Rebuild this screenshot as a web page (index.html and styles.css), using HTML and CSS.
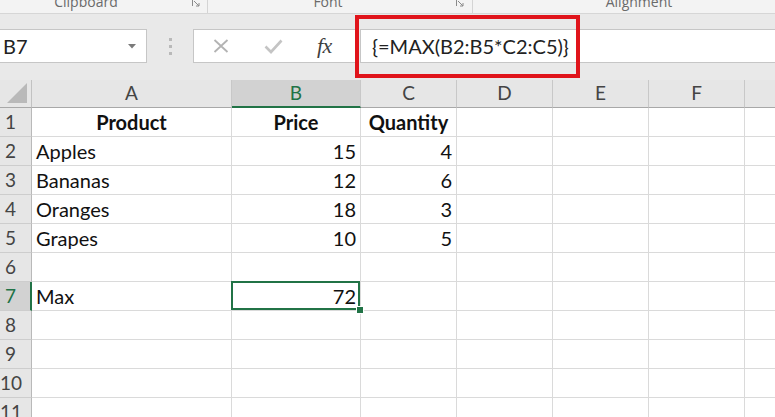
FILE: index.html
```html
<!DOCTYPE html>
<html>
<head>
<meta charset="utf-8">
<link rel="stylesheet" href="styles.css">
</head>
<body>
<div class="app">
  <div class="ribbon">
    <div class="group g1"><span class="glabel">Clipboard</span><svg class="launch" width="8" height="8" viewBox="0 0 8 8"><path d="M0.5 7V0.5H3M2 2l5 5M7 4v3H4" fill="none" stroke="#8a8a8a" stroke-width="1"/></svg></div>
    <div class="group g2"><span class="glabel">Font</span><svg class="launch" width="8" height="8" viewBox="0 0 8 8"><path d="M0.5 7V0.5H3M2 2l5 5M7 4v3H4" fill="none" stroke="#8a8a8a" stroke-width="1"/></svg></div>
    <div class="group g3"><span class="glabel">Alignment</span></div>
  </div>
  <div class="fbar">
    <div class="namebox"><span>B7</span><svg class="dd" width="8" height="5" viewBox="0 0 8 5"><path d="M0 0h8L4 4.5z" fill="#7a7a7a"/></svg></div>
    <div class="grip"><i></i><i></i><i></i></div>
    <div class="fbtns">
      <svg class="ico-x" width="16" height="14" viewBox="0 0 16 14"><path d="M1.5 1l13 12M14.5 1l-13 12" stroke="#b3b3b3" stroke-width="1.8" fill="none"/></svg>
      <svg class="ico-ok" width="19" height="15" viewBox="0 0 19 15"><path d="M1.5 7.5l5.5 5.5L17.5 1.5" stroke="#c4c4c4" stroke-width="2.6" fill="none"/></svg>
      <span class="fx">fx</span>
    </div>
    <div class="finput">{=MAX(B2:B5*C2:C5)}</div>
  </div>
  <div class="sheet">
    <div class="hd corner"><svg width="31" height="27" viewBox="0 0 31 27"><path d="M27 3V23H7z" fill="#b9b9b9"/></svg></div>
    <div class="hd col">A</div>
    <div class="hd col sel">B</div>
    <div class="hd col">C</div>
    <div class="hd col">D</div>
    <div class="hd col">E</div>
    <div class="hd col">F</div>
    <div class="hd col last"></div>

    <div class="hd row">1</div>
    <div class="c center b">Product</div><div class="c center b">Price</div><div class="c center b">Quantity</div><div class="c"></div><div class="c"></div><div class="c"></div><div class="c last"></div>

    <div class="hd row">2</div>
    <div class="c">Apples</div><div class="c num">15</div><div class="c num">4</div><div class="c"></div><div class="c"></div><div class="c"></div><div class="c last"></div>

    <div class="hd row">3</div>
    <div class="c">Bananas</div><div class="c num">12</div><div class="c num">6</div><div class="c"></div><div class="c"></div><div class="c"></div><div class="c last"></div>

    <div class="hd row">4</div>
    <div class="c">Oranges</div><div class="c num">18</div><div class="c num">3</div><div class="c"></div><div class="c"></div><div class="c"></div><div class="c last"></div>

    <div class="hd row">5</div>
    <div class="c">Grapes</div><div class="c num">10</div><div class="c num">5</div><div class="c"></div><div class="c"></div><div class="c"></div><div class="c last"></div>

    <div class="hd row">6</div>
    <div class="c"></div><div class="c"></div><div class="c"></div><div class="c"></div><div class="c"></div><div class="c"></div><div class="c last"></div>

    <div class="hd row rsel">7</div>
    <div class="c">Max</div><div class="c num active">72</div><div class="c"></div><div class="c"></div><div class="c"></div><div class="c"></div><div class="c last"></div>

    <div class="hd row">8</div>
    <div class="c"></div><div class="c"></div><div class="c"></div><div class="c"></div><div class="c"></div><div class="c"></div><div class="c last"></div>

    <div class="hd row">9</div>
    <div class="c"></div><div class="c"></div><div class="c"></div><div class="c"></div><div class="c"></div><div class="c"></div><div class="c last"></div>

    <div class="hd row">10</div>
    <div class="c"></div><div class="c"></div><div class="c"></div><div class="c"></div><div class="c"></div><div class="c"></div><div class="c last"></div>

    <div class="hd row">11</div>
    <div class="c"></div><div class="c"></div><div class="c"></div><div class="c"></div><div class="c"></div><div class="c"></div><div class="c last"></div>
  </div>
  <div class="highlight"></div>
</div>
</body>
</html>
```

FILE: styles.css
```css
html, body {
  margin: 0;
  padding: 0;
  background: #ffffff;
  overflow: hidden;
}
.app {
  position: relative;
  width: 775px;
  height: 417px;
  overflow: hidden;
  font-family: Lato, "Open Sans", sans-serif;
}

/* ribbon group labels (cropped at the top, as in the screenshot) */
.ribbon {
  display: flex;
  height: 13px;
  background: #f3f3f3;
  border-bottom: 1px solid #d6d6d6;
  overflow: hidden;
  font-family: "Open Sans", "Noto Sans", sans-serif;
  font-size: 14px;
  color: #6a6a6a;
}
.group {
  display: flex;
  align-items: flex-end;
  height: 13px;
  box-sizing: border-box;
  border-right: 1px solid #d4d4d4;
  flex: none;
}
.glabel {
  display: block;
  text-align: center;
  line-height: 14px;
  margin-bottom: 4px;
  white-space: nowrap;
}
.g1 { width: 208px; }
.g1 .glabel { width: 172px; }
.g2 { width: 265px; }
.g2 .glabel { width: 240px; }
.g3 { width: 332px; border-right: none; }
.g3 .glabel { width: 332px; }
.launch {
  align-self: flex-start;
  margin-top: -1px;
  margin-left: 20px;
}
.g2 .launch { margin-left: 8px; }

/* formula bar */
.fbar {
  display: flex;
  height: 66px;
  box-sizing: border-box;
  padding-top: 15px;
  padding-bottom: 17px;
  background: #e9e9e9;
}
.namebox {
  width: 147px;
  height: 34px;
  box-sizing: border-box;
  background: #fff;
  border: 1px solid #c6c6c6;
  border-left: none;
  display: flex;
  align-items: center;
  justify-content: space-between;
  padding: 0 10px 0 3px;
  font-size: 20px;
  color: #222;
  flex: none;
}
.dd { margin-top: 1px; }
.grip {
  width: 46px;
  display: flex;
  flex-direction: column;
  align-items: center;
  justify-content: center;
  gap: 4px;
  flex: none;
}
.grip i {
  display: block;
  width: 3px;
  height: 3px;
  background: #b9b9b9;
}
.fbtns {
  width: 164px;
  height: 34px;
  box-sizing: border-box;
  background: #fff;
  border: 1px solid #c6c6c6;
  display: flex;
  align-items: center;
  flex: none;
}
.ico-x { margin-left: 19px; }
.ico-ok { margin-left: 35px; }
.fx {
  margin-left: 34px;
  font-family: "Liberation Serif", "DejaVu Serif", serif;
  font-style: italic;
  font-size: 22px;
  color: #3f3f3f;
  letter-spacing: -0.5px;
}
.finput {
  flex: 1;
  height: 34px;
  margin-left: 3px;
  box-sizing: border-box;
  background: #fff;
  border: 1px solid #c6c6c6;
  border-right: none;
  padding-left: 11px;
  display: flex;
  align-items: center;
  font-size: 20px;
  color: #222;
  white-space: nowrap;
}

/* sheet grid */
.sheet {
  display: grid;
  grid-template-columns: 32px 200px 129px 96px 96px 96px 96px 1fr;
  grid-template-rows: 28px repeat(11, 29px);
  font-size: 20px;
  color: #111;
}
.hd {
  background: #e6e6e6;
  box-sizing: border-box;
  color: #444;
}
.corner {
  border-right: 1px solid #c2c2c2;
  border-bottom: 1px solid #a8a8a8;
}
.corner svg { display: block; }
.col {
  border-right: 1px solid #c8c8c8;
  border-bottom: 1px solid #a8a8a8;
  text-align: center;
  line-height: 26px;
  font-size: 19px;
}
.col.last { border-right: none; }
.col.sel {
  background: #d2d2d2;
  color: #217346;
  border-bottom: 2px solid #217346;
}
.row {
  border-right: 1px solid #b9b9b9;
  border-bottom: 1px solid #cdcdcd;
  line-height: 28px;
  padding-right: 10px;
  text-align: center;
  font-size: 19px;
}
.row.rsel {
  background: #d2d2d2;
  color: #217346;
  border-right: 2px solid #217346;
  padding-right: 9px;
}
.c {
  box-sizing: border-box;
  border-right: 1px solid #dadada;
  border-bottom: 1px solid #dadada;
  line-height: 28px;
  padding: 0 4px;
  white-space: nowrap;
}
.c.last { border-right: none; }
.center { text-align: center; }
.num { text-align: right; }
.b { font-weight: 700; }
.active { position: relative; }
.active::after {
  content: "";
  position: absolute;
  top: -1px;
  left: -1px;
  right: 0;
  bottom: 0;
  border: 2px solid #217346;
}
.active::before {
  content: "";
  position: absolute;
  right: -4px;
  bottom: -4px;
  width: 6px;
  height: 6px;
  background: #217346;
  border: 1px solid #fff;
  z-index: 2;
}

/* red annotation box */
.highlight {
  position: absolute;
  left: 355px;
  top: 15px;
  width: 225px;
  height: 63px;
  box-sizing: border-box;
  border: 4px solid #e0141b;
}
```
